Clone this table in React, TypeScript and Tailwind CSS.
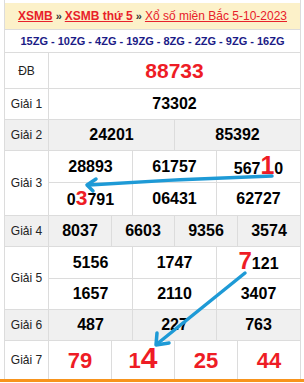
import React from 'react';

const font = { fontFamily: '"Liberation Sans", Arial, sans-serif' };

// one cell of a prize row
const Cell = ({ children, first }: { children: React.ReactNode; first?: boolean }) => (
  <div
    className={`flex-1 flex items-center justify-center font-bold text-[16px] text-black ${
      first ? '' : 'border-l border-[#dcdcdc]'
    }`}
  >
    {children}
  </div>
);

const Row = ({
  label,
  rows,
  heights,
  grey,
}: {
  label: string;
  rows: React.ReactNode[][];
  heights: string[];
  grey?: boolean;
}) => (
  <div className={`flex border-b border-[#dcdcdc] ${grey ? 'bg-[#f0f0f0]' : 'bg-white'}`}>
    <div className="w-[44px] shrink-0 border-r border-[#dcdcdc] flex items-center justify-center text-[12px] text-[#222]">
      {label}
    </div>
    <div className="flex-1 flex flex-col">
      {rows.map((cells, i) => (
        <div
          key={i}
          className={`flex ${heights[i]} ${i < rows.length - 1 ? 'border-b border-[#dcdcdc]' : ''}`}
        >
          {cells.map((c, j) => (
            <Cell key={j} first={j === 0}>
              {c}
            </Cell>
          ))}
        </div>
      ))}
    </div>
  </div>
);

const Big = ({ children, size }: { children: React.ReactNode; size: string }) => (
  <span className={`text-[#ee1c25] ${size} leading-none`}>{children}</span>
);

export default function App() {
  const red7 = 'text-[#ee1c25] text-[22px]';
  return (
    <div className="relative w-[304px] h-[383px] bg-white overflow-hidden" style={font}>
      <div className="ml-1 w-[297px] border-x border-[#dcdcdc]">
        <div className="h-[3px] bg-white"></div>

        {/* title */}
        <div className="h-[27px] bg-[#fcf1c9] border-b border-[#dcdcdc] flex items-center justify-center text-[12px] font-bold text-[#333]">
          <span className="text-[#e8202a] underline">XSMB</span>
          <span className="mx-[3px] text-[11px]">»</span>
          <span className="text-[#e8202a] underline">XSMB thứ 5</span>
          <span className="mx-[3px] text-[11px]">»</span>
          <span className="text-[#e8202a] underline font-normal">Xổ số miền Bắc 5-10-2023</span>
        </div>

        {/* codes */}
        <div className="h-[23px] border-b border-[#dcdcdc] flex items-center justify-center text-[11px] font-bold text-[#1b1b86]">
          15ZG - 10ZG - 4ZG - 19ZG - 8ZG - 2ZG - 9ZG - 16ZG
        </div>

        <Row
          label="ĐB"
          heights={['h-[35px]']}
          rows={[[<span className="text-[#ee1c25] text-[21px]">88733</span>]]}
        />
        <Row label="Giải 1" heights={['h-[30px]']} rows={[['73302']]} />
        <Row label="Giải 2" grey heights={['h-[30px]']} rows={[['24201', '85392']]} />
        <Row
          label="Giải 3"
          heights={['h-[32px]', 'h-[32px]']}
          rows={[
            [
              '28893',
              '61757',
              <span>
                567<Big size="text-[25px]">1</Big>0
              </span>,
            ],
            [
              <span>
                0<Big size="text-[21px]">3</Big>791
              </span>,
              '06431',
              '62727',
            ],
          ]}
        />
        <Row label="Giải 4" grey heights={['h-[30px]']} rows={[['8037', '6603', '9356', '3574']]} />
        <Row
          label="Giải 5"
          heights={['h-[32px]', 'h-[30px]']}
          rows={[
            [
              '5156',
              '1747',
              <span>
                <Big size="text-[24px]">7</Big>121
              </span>,
            ],
            ['1657', '2110', '3407'],
          ]}
        />
        <Row label="Giải 6" grey heights={['h-[30px]']} rows={[['487', '227', '763']]} />
        <div className="flex h-[38px] bg-white">
          <div className="w-[44px] shrink-0 border-r border-[#dcdcdc] flex items-center justify-center text-[12px] text-[#222]">
            Giải 7
          </div>
          <div className="flex-1 flex">
            <Cell first>
              <span className={red7}>79</span>
            </Cell>
            <Cell>
              <span className={red7}>
                1<span className="text-[30px] leading-none">4</span>
              </span>
            </Cell>
            <Cell>
              <span className={red7}>25</span>
            </Cell>
            <Cell>
              <span className={red7}>44</span>
            </Cell>
          </div>
        </div>
      </div>
      <div className="h-[3px] bg-[#f7941d]"></div>

      {/* arrows drawn over the table */}
      <svg className="absolute inset-0 pointer-events-none" width="304" height="383">
        <g stroke="#1e9ad6" strokeWidth="3.5" fill="none" strokeLinecap="round" strokeLinejoin="round">
          <path d="M272 176 Q180 179 89 185" />
          <path d="M96 179 L87 185 L93 191" />
          <path d="M245 273 L157 344" />
          <path d="M157 333 L156 345 L169 343" />
        </g>
      </svg>
    </div>
  );
}
